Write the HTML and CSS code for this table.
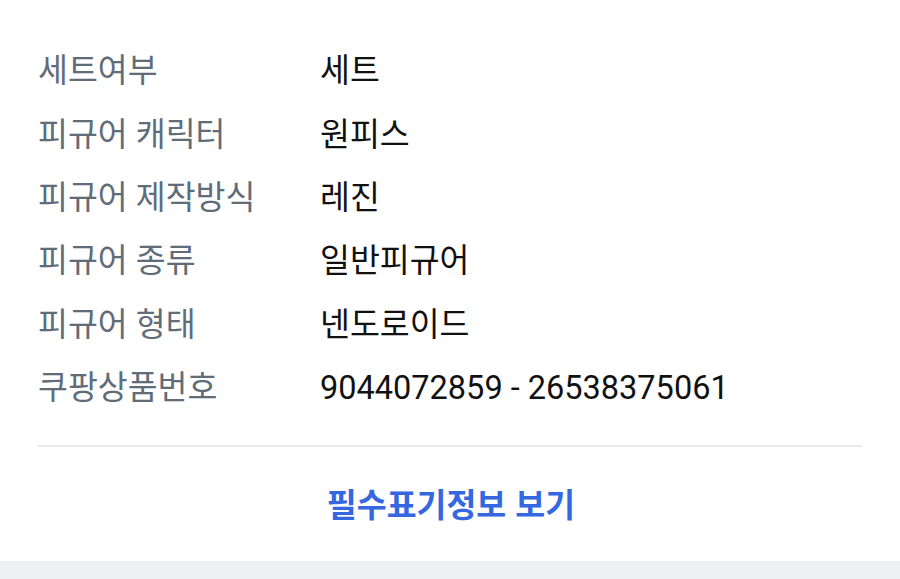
FILE: index.html
```html
<!DOCTYPE html>
<html lang="ko">
<head>
<meta charset="utf-8">
<link rel="stylesheet" href="styles.css">
</head>
<body>
<div class="page">
  <section class="info">
    <dl class="specs">
      <div class="row"><dt>세트여부</dt><dd>세트</dd></div>
      <div class="row"><dt>피규어 캐릭터</dt><dd>원피스</dd></div>
      <div class="row"><dt>피규어 제작방식</dt><dd>레진</dd></div>
      <div class="row"><dt>피규어 종류</dt><dd>일반피규어</dd></div>
      <div class="row"><dt>피규어 형태</dt><dd>넨도로이드</dd></div>
      <div class="row"><dt>쿠팡상품번호</dt><dd>9044072859 - 26538375061</dd></div>
    </dl>
    <div class="divider"></div>
    <div class="more"><a class="more-link">필수표기정보 보기</a></div>
  </section>
  <div class="footer-strip"></div>
</div>
</body>
</html>
```
FILE: styles.css
```css
html, body {
  margin: 0;
  padding: 0;
  background: #ffffff;
}
.page {
  width: 900px;
  height: 579px;
  overflow: hidden;
  font-family: Roboto, "Noto Sans CJK KR", sans-serif;
}
.info {
  padding: 40px 38px 0 38px;
  height: 521px;
}
.specs {
  margin: 0;
}
.row {
  display: grid;
  grid-template-columns: 282px 1fr;
  height: 63.4px;
  align-items: center;
  font-size: 32.5px;
  line-height: 1.2;
}
.row dt {
  color: #616c79;
}
.row dd {
  margin: 0;
  color: #111111;
}
.divider {
  margin-top: 25px;
  height: 2px;
  background: #e9eaec;
}
.more {
  display: flex;
  justify-content: center;
  align-items: center;
  height: 110px;
}
.more-link {
  font-size: 32.5px;
  font-weight: 700;
  color: #3567e0;
  font-family: "Noto Sans CJK KR", sans-serif;
  padding-left: 2px;
}
.footer-strip {
  height: 18px;
  background: #eef1f4;
}
```
